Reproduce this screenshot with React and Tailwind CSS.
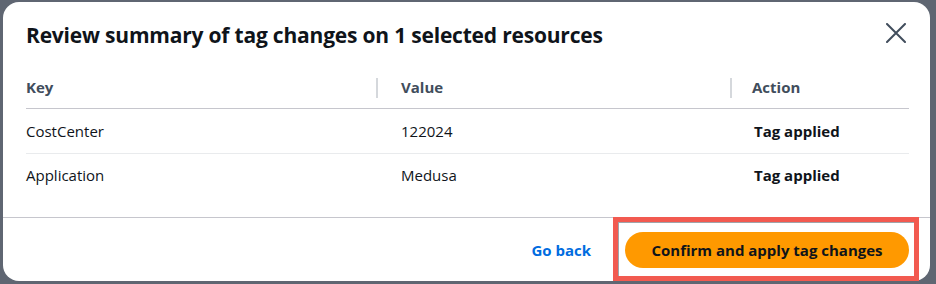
import React from "react";

const rows = [
  { key: "CostCenter", value: "122024", action: "Tag applied" },
  { key: "Application", value: "Medusa", action: "Tag applied" },
];

const CloseIcon = () => (
  <svg width="20" height="20" viewBox="0 0 20 20" fill="none">
    <path d="M1 1L19 19M19 1L1 19" stroke="#414d5c" strokeWidth="2" strokeLinecap="round" />
  </svg>
);

const App = () => {
  return (
    <div
      className="w-[936px] h-[284px] bg-[#5f6672] pt-[2px] pl-[3px] overflow-hidden"
      style={{ fontFamily: '"Open Sans", "Noto Sans", sans-serif' }}
    >
      <div className="w-[927px] h-[279px] bg-white rounded-2xl flex flex-col">
        {/* header */}
        <div className="flex items-center justify-between pl-[23px] pr-[24px] pt-[19px]">
          <h2 className="text-[21px] leading-[28px] font-bold text-[#0f141a] tracking-[-0.2px]">
            Review summary of tag changes on 1 selected resources
          </h2>
          <button className="p-0 mb-[4px]">
            <CloseIcon />
          </button>
        </div>

        {/* table */}
        <div className="ml-[23px] w-[883px] mt-[18px]">
          <div className="grid grid-cols-[350px_354px_179px] h-[42px] border-b border-[#c6c6cd] text-[15px] font-bold text-[#414d5c]">
            <div className="flex items-center">Key</div>
            <div className="flex items-center">
              <span className="w-[2px] h-5 bg-[#d5d8dc] mr-[23px]" />
              Value
            </div>
            <div className="flex items-center">
              <span className="w-[2px] h-5 bg-[#d5d8dc] mr-[20px]" />
              Action
            </div>
          </div>
          {rows.map((r, i) => (
            <div
              key={r.key}
              className={
                i < rows.length - 1
                  ? "grid grid-cols-[350px_354px_179px] h-[45px] border-b border-[#e9ebed] text-[15px] text-[#0f141a]"
                  : "grid grid-cols-[350px_354px_179px] h-[42px] text-[15px] text-[#0f141a]"
              }
            >
              <div className="flex items-center">{r.key}</div>
              <div className="flex items-center pl-[25px]">{r.value}</div>
              <div className="flex items-center pl-[24px] font-bold">{r.action}</div>
            </div>
          ))}
        </div>

        {/* footer */}
        <div className="mt-[21px] border-t border-[#c6c6cd] flex justify-end items-start pt-[14px] pr-[21px] gap-[34px]">
          <a href="#" className="h-[36px] flex items-center text-[15px] font-bold text-[#006ce0]">
            Go back
          </a>
          <div className="relative">
            <div className="absolute -left-[12px] -right-[10px] -top-[15px] -bottom-[13px] border-[5px] border-[#f25a50] shadow-[inset_1px_1px_0_#a0a4aa]" />
            <button className="relative h-[36px] w-[284px] rounded-full bg-[#ff9900] text-[15px] font-bold text-[#0f141a]">
              Confirm and apply tag changes
            </button>
          </div>
        </div>
      </div>
    </div>
  );
};

export default App;
